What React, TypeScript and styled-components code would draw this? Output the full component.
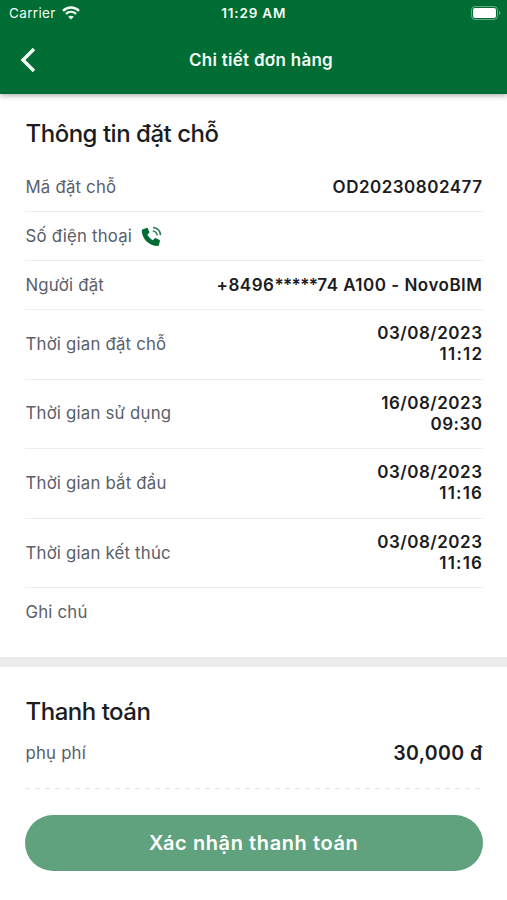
import React from 'react';
import styled, { createGlobalStyle } from 'styled-components';

const GlobalStyle = createGlobalStyle`
  * { box-sizing: border-box; }
  html, body { margin: 0; padding: 0; background: #fff; }
  body { font-family: Inter, "Liberation Sans", sans-serif; color: #1c1c1e; }
  h1, h2 { margin: 0; }
`;

const Screen = styled.div`
  width: 507px;
  height: 900px;
  overflow: hidden;
  display: flex;
  flex-direction: column;
  background: #fff;
`;

const Header = styled.header`
  flex: none;
  height: 94px;
  background: #006d34;
  color: #f4fbf4;
  box-shadow: 0 2px 5px rgba(0, 0, 0, 0.3);
`;

const StatusBar = styled.div`
  height: 27px;
  padding: 0 6.5px 0 9px;
  display: grid;
  grid-template-columns: 1fr auto 1fr;
  align-items: center;
  font-size: 13.5px;
  line-height: 27px;
`;

const Carrier = styled.div`
  display: flex;
  align-items: center;
  gap: 6px;
  letter-spacing: 0.35px;

  svg {
    margin-top: -1px;
  }
`;

const Clock = styled.div`
  font-weight: 600;
  letter-spacing: 0.8px;
  margin-right: 2px;
`;

const BatterySlot = styled.div`
  display: flex;
  justify-content: flex-end;
  padding-bottom: 1px;
`;

const NavBar = styled.div`
  height: 66px;
  padding: 0 20px;
  display: grid;
  grid-template-columns: 40px 1fr 25px;
  align-items: center;
`;

const BackButton = styled.button`
  padding: 0;
  border: 0;
  background: none;
  display: flex;
  color: inherit;
`;

const NavTitle = styled.h1`
  text-align: center;
  font-size: 17px;
  font-weight: 600;
  letter-spacing: 0.28px;
`;

const Section = styled.section<{ $height: number; $top: number }>`
  flex: none;
  height: ${(p) => p.$height}px;
  padding: ${(p) => p.$top}px 24.5px 0 25px;
`;

const Heading = styled.h2`
  height: 34px;
  line-height: 34px;
  padding-left: 0.5px;
  font-size: 24px;
  font-weight: 500;
  letter-spacing: -0.48px;
`;

const Row = styled.div<{ $height: number; $line?: boolean }>`
  height: ${(p) => p.$height}px;
  display: flex;
  align-items: center;
  justify-content: space-between;
  border-bottom: ${(p) => (p.$line ? '1px solid #ededed' : '0')};
`;

const Label = styled.div`
  display: flex;
  align-items: center;
  gap: 9px;
  padding-left: 0.5px;
  font-size: 16.8px;
  line-height: 21px;
  color: #596068;
  letter-spacing: 0.2px;
`;

const Value = styled.div<{ $large?: boolean }>`
  text-align: right;
  font-size: ${(p) => (p.$large ? 19.5 : 17)}px;
  line-height: 21px;
  font-weight: 600;
  letter-spacing: ${(p) => (p.$large ? 0.4 : 0.5)}px;
`;

const Masked = styled.span`
  letter-spacing: -0.6px;
`;

const Time = styled.span<{ $wide?: boolean }>`
  letter-spacing: ${(p) => (p.$wide ? 1.2 : 0.5)}px;
  margin-right: ${(p) => (p.$wide ? -0.7 : 0)}px;
`;

const Band = styled.div`
  flex: none;
  height: 10px;
  background: #ebebeb;
`;

const Dashes = styled.div`
  height: 1px;
  background: repeating-linear-gradient(90deg, #e4e4e4 0 5px, transparent 5px 10px);
`;

const ConfirmButton = styled.button`
  display: block;
  width: 100%;
  height: 56px;
  margin-top: 26px;
  border: 0;
  border-radius: 28px;
  background: #5fa27d;
  color: #fff;
  font: 600 20px Inter, "Liberation Sans", sans-serif;
  letter-spacing: 0.6px;
`;

const WifiIcon = () => (
  <svg width="18" height="14" viewBox="0 0 18 14" fill="none" stroke="currentColor">
    <path d="M1 4.8C5.500 .5 12.500 .5 17 4.800" strokeWidth="2.500" />
    <path d="M3.900 7.900c3-2.700 7.200-2.700 10.200 0" strokeWidth="2.300" />
    <path d="M9 13.600 6.200 10.700c1.700-1.400 3.900-1.400 5.600 0z" fill="currentColor" stroke="none" />
  </svg>
);

const BatteryIcon = () => (
  <svg width="30" height="14" viewBox="0 0 30 14">
    <rect x=".5" y=".5" width="26" height="13" rx="3.500" fill="none" stroke="#fff" strokeOpacity=".4" />
    <rect x="2" y="2" width="23" height="10" rx="2" fill="#fff" />
    <path d="M28 5v4c1.800-.8 1.800-3.200 0-4" fill="#fff" fillOpacity=".45" />
  </svg>
);

const BackIcon = () => (
  <svg width="16" height="26" viewBox="0 0 16 26" fill="none" stroke="currentColor" strokeWidth="3.400">
    <path d="M14 2 3 13l11 11" />
  </svg>
);

const PhoneIcon = () => (
  <svg width="21" height="21" viewBox="0 0 22 22" fill="none">
    <path
      d="M1.500 3.700 5.600 2c.7-.3 1.300 0 1.600.7l1.500 3.500c.2.600.1 1.100-.4 1.500L6.700 9c1.200 2.700 3.200 4.700 5.900 5.900l1.600-1.800c.4-.4.900-.5 1.500-.3l3.300 1.500c.7.300 1 .8.800 1.500l-1 4.200c-.2.700-.7 1-1.400 1C8.700 21 1 13.500.8 5c0-.6.200-1.100.7-1.300z"
      fill="#006d34"
    />
    <path d="M12.600 1.600c4.400.4 7.500 3.600 7.900 8M12.300 5.300c2.500.2 4.300 2 4.600 4.500" stroke="#2c8058" strokeWidth="1.700" />
  </svg>
);

const times = [
  { label: 'Thời gian đặt chỗ', date: '03/08/2023', time: '11:12' },
  { label: 'Thời gian sử dụng', date: '16/08/2023', time: '09:30' },
  { label: 'Thời gian bắt đầu', date: '03/08/2023', time: '11:16' },
  { label: 'Thời gian kết thúc', date: '03/08/2023', time: '11:16' },
];

export default function App() {
  return (
    <>
      <GlobalStyle />
      <Screen>
        <Header>
          <StatusBar>
            <Carrier>Carrier <WifiIcon /></Carrier>
            <Clock>11:29 AM</Clock>
            <BatterySlot><BatteryIcon /></BatterySlot>
          </StatusBar>
          <NavBar>
            <BackButton aria-label="Quay lại"><BackIcon /></BackButton>
            <NavTitle>Chi tiết đơn hàng</NavTitle>
          </NavBar>
        </Header>
        <Section $height={563} $top={23}>
          <Heading>Thông tin đặt chỗ</Heading>
          <Row $height={12} />
          <Row $height={49} $line>
            <Label>Mã đặt chỗ</Label>
            <Value>OD20230802477</Value>
          </Row>
          <Row $height={49} $line>
            <Label>Số điện thoại <PhoneIcon /></Label>
          </Row>
          <Row $height={49} $line>
            <Label>Người đặt</Label>
            <Value>+8496<Masked>*****</Masked>74 A100 - NovoBIM</Value>
          </Row>
          {times.map((t) => (
            <Row key={t.label} $height={69.6} $line>
              <Label>{t.label}</Label>
              <Value>
                {t.date}
                <br />
                <Time $wide={t.time.startsWith('11')}>{t.time}</Time>
              </Value>
            </Row>
          ))}
          <Row $height={48}>
            <Label>Ghi chú</Label>
          </Row>
        </Section>
        <Band />
        <Section $height={233} $top={28}>
          <Heading>Thanh toán</Heading>
          <Row $height={48}>
            <Label>phụ phí</Label>
            <Value $large>30,000 đ</Value>
          </Row>
          <Row $height={11} />
          <Dashes />
          <ConfirmButton>Xác nhận thanh toán</ConfirmButton>
        </Section>
      </Screen>
    </>
  );
}
